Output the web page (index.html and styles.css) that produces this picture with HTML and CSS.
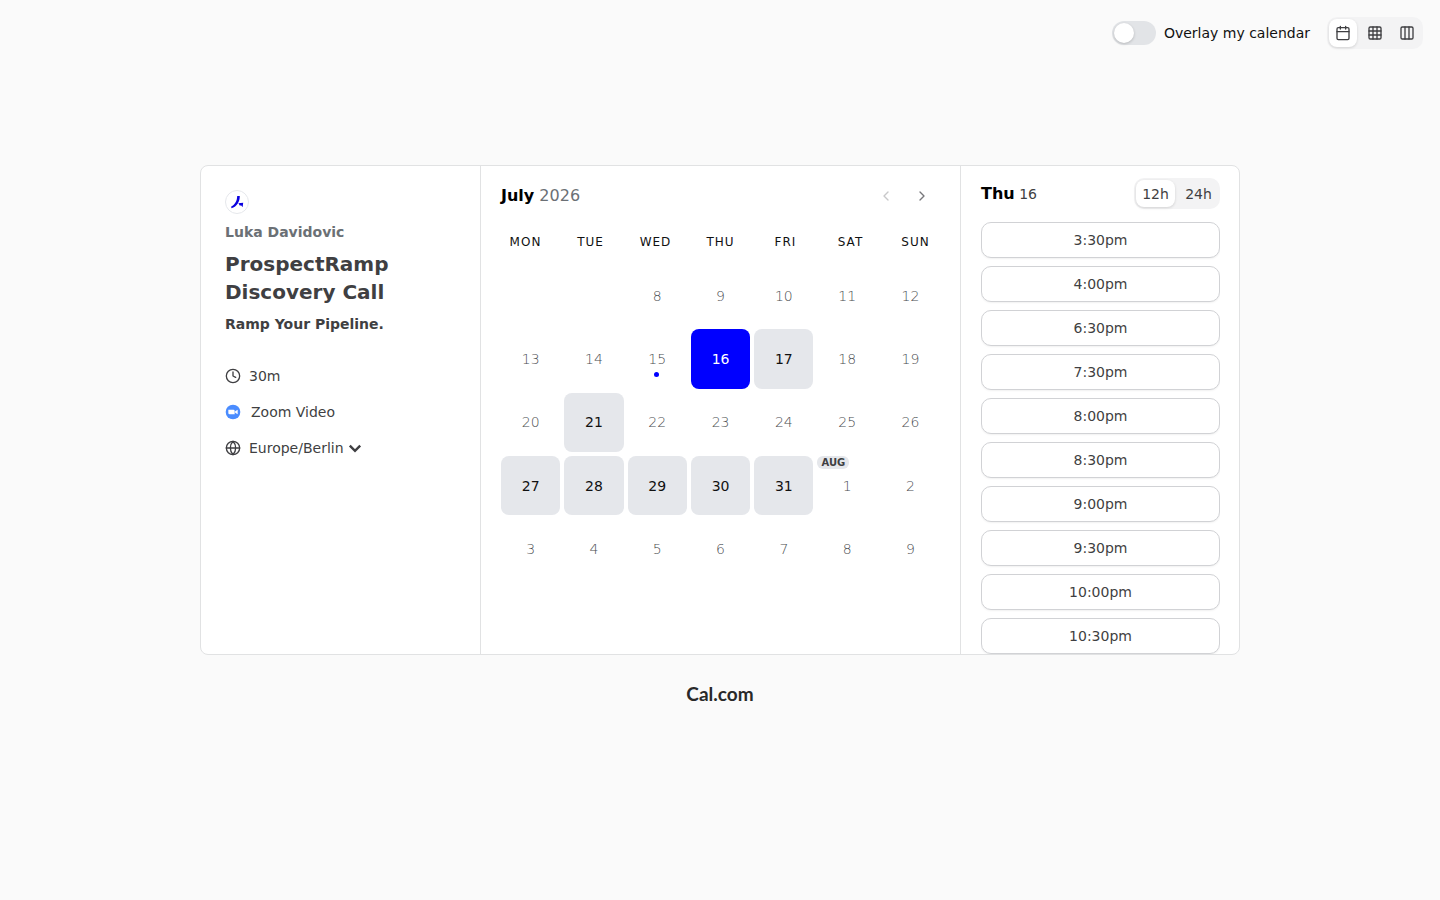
FILE: index.html
```html
<!DOCTYPE html>
<html lang="en">
<head>
<meta charset="UTF-8">
<meta name="viewport" content="width=device-width, initial-scale=1.0">
<title>ProspectRamp Discovery Call | Luka Davidovic</title>
<link rel="stylesheet" href="styles.css">
</head>
<body>
  <header class="toolbar">
    <div class="overlay-switch">
      <input type="checkbox" id="overlay" class="switch" role="switch">
      <label for="overlay">Overlay my calendar</label>
    </div>
    <div class="toggle-group">
      <button class="toggle active" aria-label="Month view">
        <svg class="icon" viewBox="0 0 24 24"><rect x="3" y="4" width="18" height="18" rx="2"/><path d="M16 2v4M8 2v4M3 10h18"/></svg>
      </button>
      <button class="toggle" aria-label="Week view">
        <svg class="icon" viewBox="0 0 24 24"><rect x="3" y="3" width="18" height="18" rx="2"/><path d="M3 9h18M3 15h18M9 3v18M15 3v18"/></svg>
      </button>
      <button class="toggle" aria-label="Column view">
        <svg class="icon" viewBox="0 0 24 24"><rect x="3" y="3" width="18" height="18" rx="2"/><path d="M9 3v18M15 3v18"/></svg>
      </button>
    </div>
  </header>

  <main class="booker">
    <section class="meta">
      <svg class="avatar" viewBox="0 0 24 24" aria-hidden="true">
        <circle cx="12" cy="12" r="11.5" fill="#fff" stroke="#e5e7eb"/>
        <path d="M12.2 6h2.600c.1 5.400-2.600 10.600-8.400 12.200l-.2-1.600c4-2.200 5.800-5.600 6-10.600z" fill="#0a00e0"/>
        <path d="M13.400 13.200l4.800-.400-.6 4.400-1.300-1.800-1.600.2z" fill="#0a00e0"/>
      </svg>
      <p class="host">Luka Davidovic</p>
      <h1>ProspectRamp Discovery Call</h1>
      <p class="tagline">Ramp Your Pipeline.</p>
      <ul class="details">
        <li>
          <svg class="icon" viewBox="0 0 24 24"><circle cx="12" cy="12" r="10"/><path d="M12 6v6l4 2"/></svg>
          <span>30m</span>
        </li>
        <li class="location">
          <svg class="zoom-icon" viewBox="0 0 24 24"><circle cx="12" cy="12" r="11" fill="#4a8cff"/><path d="M5 8.500h7.500a2 2 0 0 1 2 2v5H7a2 2 0 0 1-2-2zM15.200 11l3.800-2.500v7L15.200 13z" fill="#fff"/></svg>
          <span>Zoom Video</span>
        </li>
        <li>
          <svg class="icon" viewBox="0 0 24 24"><circle cx="12" cy="12" r="10"/><path d="M12 2a14.500 14.500 0 0 0 0 20 14.500 14.500 0 0 0 0-20M2 12h20"/></svg>
          <button class="timezone">
            Europe/Berlin
            <svg viewBox="0 0 20 20"><path d="M3.500 7l6.500 6.500L16.500 7"/></svg>
          </button>
        </li>
      </ul>
    </section>

    <section class="calendar">
      <div class="calendar-header">
        <h2><strong>July</strong> <span>2026</span></h2>
        <div class="month-nav">
          <button disabled aria-label="Previous month"><svg class="icon" viewBox="0 0 24 24"><path d="M15 18l-6-6 6-6"/></svg></button>
          <button aria-label="Next month"><svg class="icon" viewBox="0 0 24 24"><path d="M9 18l6-6-6-6"/></svg></button>
        </div>
      </div>
      <div class="weekdays">
        <div>Mon</div><div>Tue</div><div>Wed</div><div>Thu</div><div>Fri</div><div>Sat</div><div>Sun</div>
      </div>
      <div class="days">
        <span></span>
        <span></span>
        <button class="day" disabled>8</button>
        <button class="day" disabled>9</button>
        <button class="day" disabled>10</button>
        <button class="day" disabled>11</button>
        <button class="day" disabled>12</button>
        <button class="day" disabled>13</button>
        <button class="day" disabled>14</button>
        <button class="day today" disabled>15</button>
        <button class="day selected">16</button>
        <button class="day">17</button>
        <button class="day" disabled>18</button>
        <button class="day" disabled>19</button>
        <button class="day" disabled>20</button>
        <button class="day">21</button>
        <button class="day" disabled>22</button>
        <button class="day" disabled>23</button>
        <button class="day" disabled>24</button>
        <button class="day" disabled>25</button>
        <button class="day" disabled>26</button>
        <button class="day">27</button>
        <button class="day">28</button>
        <button class="day">29</button>
        <button class="day">30</button>
        <button class="day">31</button>
        <button class="day" disabled><span class="month-badge">Aug</span>1</button>
        <button class="day" disabled>2</button>
        <button class="day" disabled>3</button>
        <button class="day" disabled>4</button>
        <button class="day" disabled>5</button>
        <button class="day" disabled>6</button>
        <button class="day" disabled>7</button>
        <button class="day" disabled>8</button>
        <button class="day" disabled>9</button>
      </div>
    </section>

    <section class="times">
      <div class="times-header">
        <h2><strong>Thu</strong> <span>16</span></h2>
        <div class="toggle-group">
          <button class="toggle format active">12h</button>
          <button class="toggle format">24h</button>
        </div>
      </div>
      <div class="slots">
        <button class="slot">3:30pm</button>
        <button class="slot">4:00pm</button>
        <button class="slot">6:30pm</button>
        <button class="slot">7:30pm</button>
        <button class="slot">8:00pm</button>
        <button class="slot">8:30pm</button>
        <button class="slot">9:00pm</button>
        <button class="slot">9:30pm</button>
        <button class="slot">10:00pm</button>
        <button class="slot">10:30pm</button>
      </div>
    </section>
  </main>

  <footer class="footer">
    <a href="#" class="brand">Cal.com</a>
  </footer>
</body>
</html>
```

FILE: styles.css
```css
* {
  box-sizing: border-box;
}
body {
  margin: 0;
  background-color: #fafafa;
  color: #3f3f42;
  font-family: "DejaVu Sans", sans-serif;
  font-size: 14px;
  line-height: 20px;
}
h1, h2, p, ul {
  margin: 0;
  padding: 0;
}
button {
  font: inherit;
  color: inherit;
  background: none;
  border: none;
  padding: 0;
  cursor: pointer;
}
.icon {
  display: block;
  width: 16px;
  height: 16px;
  fill: none;
  stroke: currentColor;
  stroke-width: 2;
  stroke-linecap: round;
  stroke-linejoin: round;
}

/* top bar */
.toolbar {
  display: flex;
  justify-content: flex-end;
  align-items: center;
  gap: 17px;
  padding: 17px;
}
.overlay-switch {
  display: flex;
  align-items: center;
  gap: 8px;
  color: #111;
}
.switch {
  appearance: none;
  width: 44px;
  height: 24px;
  margin: 0;
  padding: 2px;
  border-radius: 12px;
  background-color: #e2e4e7;
  cursor: pointer;
}
.switch::before {
  content: "";
  display: block;
  width: 20px;
  height: 20px;
  border-radius: 50%;
  background-color: #fff;
  box-shadow: 0 1px 3px rgba(0,0,0,0.2);
}
.switch:checked::before {
  margin-left: auto;
}
.toggle-group {
  display: flex;
  gap: 4px;
  padding: 2px;
  border-radius: 10px;
  background-color: #f3f3f4;
}
.toggle {
  display: flex;
  align-items: center;
  justify-content: center;
  width: 28px;
  height: 28px;
  border-radius: 8px;
}
.toggle.active {
  background-color: #fff;
  box-shadow: 0 1px 3px rgba(0,0,0,0.14);
}
.toggle.format {
  width: 39px;
  height: 27px;
}

/* booking card */
.booker {
  display: grid;
  grid-template-columns: 279px 1fr 278px;
  max-width: 1040px;
  margin: 99px auto 0;
  border: 1px solid #e1e2e3;
  border-radius: 8px;
  background-color: #fff;
  overflow: hidden;
}
.meta {
  padding: 24px;
}
.avatar {
  display: block;
  width: 24px;
  height: 24px;
}
.host {
  margin-top: 8px;
  color: #6b7075;
  font-weight: bold;
}
h1 {
  margin: 8px 0;
  font-size: 20px;
  line-height: 28px;
}
.tagline {
  font-weight: bold;
}
.details {
  display: flex;
  flex-direction: column;
  gap: 16px;
  margin-top: 32px;
  list-style: none;
}
.details li {
  display: flex;
  align-items: center;
  gap: 8px;
}
.details .location {
  gap: 10px;
}
.zoom-icon {
  width: 16px;
  height: 16px;
}
.timezone {
  display: flex;
  align-items: center;
  gap: 3px;
}
.timezone svg {
  width: 16px;
  height: 16px;
  fill: none;
  stroke: currentColor;
  stroke-width: 3;
}

/* month */
.calendar {
  padding: 20px 20px 76px;
  border-left: 1px solid #e1e2e3;
  border-right: 1px solid #e1e2e3;
}
.calendar-header {
  display: flex;
  align-items: center;
  justify-content: space-between;
}
h2 {
  font-size: 16px;
  font-weight: normal;
  line-height: 20px;
}
h2 strong {
  color: #000;
  font-size: 16px;
}
.calendar-header span {
  color: #6b7075;
}
.month-nav {
  display: flex;
}
.month-nav button {
  padding: 2px 10px;
  color: #77777b;
}
.month-nav button:disabled {
  opacity: 0.4;
}
.weekdays {
  display: grid;
  grid-template-columns: repeat(7, 1fr);
  gap: 16px;
  margin: 18px 0 6px;
  padding: 8px 0;
  color: #111;
  font-size: 12px;
  line-height: 20px;
  letter-spacing: 1px;
  text-align: center;
  text-transform: uppercase;
}
.days {
  display: grid;
  grid-template-columns: repeat(7, 1fr);
  gap: 4px;
}
.day {
  position: relative;
  aspect-ratio: 1;
  border-radius: 8px;
  background-color: #e5e7eb;
  color: #111;
}
.day:disabled {
  background: none;
  color: #4a4d50;
  font-weight: 200;
  cursor: default;
}
.day.selected {
  background-color: #0000ff;
  color: #fff;
}
.today::after {
  content: "";
  position: absolute;
  left: 50%;
  bottom: 12px;
  width: 5px;
  height: 5px;
  margin-left: -3px;
  border-radius: 50%;
  background-color: #0000ff;
}
.month-badge {
  position: absolute;
  top: 0;
  left: 0;
  padding: 0 4px;
  border-radius: 6px;
  background-color: #e5e7eb;
  color: #3f3f42;
  font-size: 10px;
  font-weight: bold;
  line-height: 13px;
  text-transform: uppercase;
}

/* time slots */
.times {
  display: flex;
  flex-direction: column;
  padding: 12px 19px 0 20px;
}
.times-header {
  display: flex;
  align-items: center;
  justify-content: space-between;
  margin-bottom: 13px;
}
.times-header h2 {
  font-size: 14px;
}
.slots {
  display: flex;
  flex: 1 1 0;
  flex-direction: column;
  gap: 8px;
  height: 0;
  overflow-y: auto;
  scrollbar-width: none;
}
.slot {
  flex: none;
  height: 36px;
  border: 1px solid #d1d2d5;
  border-radius: 10px;
  background-color: #fff;
  box-shadow: 0 1px 2px rgba(0,0,0,0.06);
}

.footer {
  padding: 27px 0;
  text-align: center;
}
.brand {
  color: #292929;
  font-family: Lato, sans-serif;
  font-size: 19px;
  font-weight: bold;
  line-height: 24px;
  text-decoration: none;
}
```
